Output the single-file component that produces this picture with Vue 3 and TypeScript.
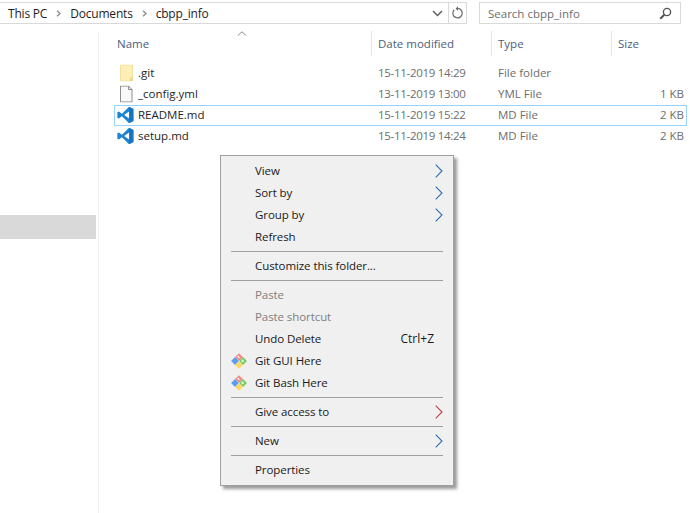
<template>
  <div class="explorer">
    <div class="toolbar">
      <div class="address">
        <div class="crumbs">
          <template v-for="(crumb, i) in crumbs" :key="crumb">
            <span>{{ crumb }}</span>
            <svg v-if="i < crumbs.length - 1" class="crumb-sep" width="5" height="7" viewBox="0 0 5 7">
              <path d="M1 .8 4 3.5 1 6.2" fill="none" stroke="#8a8a8a" stroke-width="1.3" />
            </svg>
          </template>
        </div>
        <svg class="drop" width="11" height="7" viewBox="0 0 11 7">
          <path d="M1 1 5.5 5.5 10 1" fill="none" stroke="#5f5f5f" stroke-width="1.5" />
        </svg>
        <div class="refresh">
          <svg width="13" height="14" viewBox="0 0 13 14">
            <path d="M5 2.6H8C10 3.3 11.2 5 11.2 7.2A4.7 4.7 0 1 1 3.2 3.8" fill="none" stroke="#707070" stroke-width="1.3" />
            <path d="M7 .3V5L4.6 2.6Z" fill="#707070" />
          </svg>
        </div>
      </div>
      <div class="search">
        <span>Search cbpp_info</span>
        <svg width="13" height="13" viewBox="0 0 13 13">
          <circle cx="8" cy="5" r="3.6" fill="none" stroke="#555" stroke-width="1.4" />
          <path d="M5.3 7.7 1.2 11.8" fill="none" stroke="#555" stroke-width="2" />
        </svg>
      </div>
    </div>

    <div class="body">
      <aside class="sidebar">
        <div class="nav-selected"></div>
      </aside>
      <main class="files">
        <div class="sort-caret">
          <svg width="10" height="5" viewBox="0 0 10 5">
            <path d="M.8 4.6 5 .8 9.2 4.6" fill="none" stroke="#8c8c8c" />
          </svg>
        </div>
        <div class="head">
          <div class="col-name">Name</div>
          <div class="col-date">Date modified</div>
          <div class="col-type">Type</div>
          <div class="col-size">Size</div>
        </div>
        <div class="rows">
          <div v-for="file in files" :key="file.name" class="row" :class="{ selected: file.selected }">
            <div class="col-name name-cell">
              <svg v-if="file.icon === 'folder'" class="file-icon" width="17" height="17" viewBox="0 0 17 17">
                <path d="M3.5 .5H15.5V16.5H3.5Z" fill="#fdefb6" stroke="#f2dfa0" />
                <path d="M13 13H15.5V16.5H13Z" fill="#f0d98e" />
              </svg>
              <svg v-else-if="file.icon === 'doc'" class="file-icon" width="17" height="17" viewBox="0 0 17 17">
                <path d="M3.5 .5H11.5L15 4V16.5H3.5Z" fill="#f8f8f8" stroke="#8d8d8d" />
                <path d="M11.5 .5V4H15" fill="none" stroke="#8d8d8d" />
              </svg>
              <svg v-else class="file-icon" width="17" height="17" viewBox="0 0 100 100">
                <path d="M71 98 97 86V14L71 2 29 43 11 29 2 34V66L11 71 29 57ZM71 29V71L42 50Z" fill="#1f84cf" />
                <path d="M71 2 97 14V86L71 98Z" fill="#0f6cb8" opacity=".55" />
              </svg>
              <span>{{ file.name }}</span>
            </div>
            <div class="col-date cell digits">{{ file.date }}</div>
            <div class="col-type cell">{{ file.type }}</div>
            <div class="col-size cell size">{{ file.size }}</div>
          </div>
        </div>
      </main>
    </div>

    <div class="menu">
      <template v-for="(item, i) in menu" :key="i">
        <div v-if="item.sep" class="sep"></div>
        <div v-else class="item" :class="{ disabled: item.disabled }">
          <svg v-if="item.git" class="git" width="16" height="16" viewBox="0 0 16 16">
            <path d="M8 .2 11.9 4 8 7.8 4.1 4Z" fill="#f58a86" />
            <path d="M6.6 3 8.4 4.8" stroke="#fff" stroke-width="1.2" />
            <path d="M4 4.1 7.9 8 4 11.9 .1 8Z" fill="#5c9df2" />
            <path d="M12 4.1 15.9 8 12 11.9 8.1 8Z" fill="#74c95c" />
            <circle cx="11.6" cy="8" r="1.4" fill="#dff5d6" />
            <path d="M8 8.2 11.9 12 8 15.8 4.1 12Z" fill="#fbd964" />
          </svg>
          <span class="label">{{ item.label }}</span>
          <span v-if="item.shortcut" class="shortcut">{{ item.shortcut }}</span>
          <svg v-if="item.arrow" class="arrow" width="8" height="14" viewBox="0 0 8 14">
            <path d="M.7.7 7 7 .7 13.3" fill="none" :stroke="item.arrow" stroke-width="1.1" />
          </svg>
        </div>
      </template>
    </div>
  </div>
</template>

<script setup lang="ts">
interface FileRow {
  name: string;
  date: string;
  type: string;
  size: string;
  icon: 'folder' | 'doc' | 'code';
  selected?: boolean;
}

interface MenuItem {
  label?: string;
  sep?: boolean;
  disabled?: boolean;
  git?: boolean;
  shortcut?: string;
  arrow?: string;
}

const crumbs = ['This PC', 'Documents', 'cbpp_info'];

const files: FileRow[] = [
  { name: '.git', date: '15-11-2019 14:29', type: 'File folder', size: '', icon: 'folder' },
  { name: '_config.yml', date: '13-11-2019 13:00', type: 'YML File', size: '1 KB', icon: 'doc' },
  { name: 'README.md', date: '15-11-2019 15:22', type: 'MD File', size: '2 KB', icon: 'code', selected: true },
  { name: 'setup.md', date: '15-11-2019 14:24', type: 'MD File', size: '2 KB', icon: 'code' }
];

const blue = '#2f6fb5';

const menu: MenuItem[] = [
  { label: 'View', arrow: blue },
  { label: 'Sort by', arrow: blue },
  { label: 'Group by', arrow: blue },
  { label: 'Refresh' },
  { sep: true },
  { label: 'Customize this folder...' },
  { sep: true },
  { label: 'Paste', disabled: true },
  { label: 'Paste shortcut', disabled: true },
  { label: 'Undo Delete', shortcut: 'Ctrl+Z' },
  { label: 'Git GUI Here', git: true },
  { label: 'Git Bash Here', git: true },
  { sep: true },
  { label: 'Give access to', arrow: '#b5473f' },
  { sep: true },
  { label: 'New', arrow: blue },
  { sep: true },
  { label: 'Properties' }
];
</script>

<style scoped>
.explorer {
  position: relative;
  width: 690px;
  height: 513px;
  overflow: hidden;
  background: #fff;
  color: #1e1e1e;
  font-family: "Open Sans", "Noto Sans", sans-serif;
  font-size: 11.5px;
}

.toolbar {
  display: flex;
  gap: 12px;
  height: 22px;
  margin-top: 2px;
  padding-right: 9px;
}

.address {
  display: flex;
  align-items: center;
  width: 467px;
  border: 1px solid #d9d9d9;
  border-left: none;
  box-sizing: border-box;
}

.crumbs {
  display: flex;
  align-items: center;
  flex: 1;
  padding-left: 8px;
  font-size: 12px;
  letter-spacing: -0.2px;
}

.crumb-sep {
  margin: 0 9px;
}

.drop {
  margin-right: 5px;
}

.refresh {
  display: flex;
  align-items: center;
  justify-content: center;
  width: 17px;
  height: 100%;
  border-left: 1px solid #d9d9d9;
}

.search {
  display: flex;
  align-items: center;
  justify-content: space-between;
  flex: 1;
  padding: 0 8px;
  border: 1px solid #d9d9d9;
  box-sizing: border-box;
  color: #6d6d6d;
  font-size: 11.5px;
}

.body {
  display: flex;
  height: 482px;
  margin-top: 7px;
}

.sidebar {
  width: 98px;
  flex: none;
  padding-top: 184px;
  border-right: 1px solid #f2f2f2;
}

.nav-selected {
  width: 96px;
  height: 24px;
  background: #d9d9d9;
}

.files {
  position: relative;
  flex: 1;
  padding-left: 18px;
}

.sort-caret {
  position: absolute;
  left: 138px;
  top: 0;
  line-height: 0;
}

.head {
  display: flex;
  align-items: stretch;
  height: 25px;
  color: #4c607a;
}

.head > div {
  display: flex;
  align-items: center;
  padding-bottom: 1px;
  border-right: 1px solid #e5e5e5;
  box-sizing: border-box;
}

.head .col-size {
  border-right: none;
}

.col-name {
  width: 255px;
}

.col-date {
  width: 120px;
  padding-left: 6px;
}

.col-type {
  width: 120px;
  padding-left: 6px;
}

.col-size {
  width: 72px;
  padding-left: 6px;
}

.rows {
  margin-top: 7px;
}

.row {
  display: flex;
  align-items: center;
  width: 573px;
  height: 21px;
  margin-left: -3px;
  padding-left: 3px;
  padding-bottom: 2px;
  box-sizing: border-box;
}

.row.selected {
  outline: 1px solid #99d1ff;
  outline-offset: -1px;
}

.name-cell {
  position: relative;
  display: flex;
  align-items: center;
  padding-left: 21px;
  box-sizing: border-box;
}

.file-icon {
  position: absolute;
  left: 0;
  top: 50%;
  transform: translateY(-50%);
}

.cell {
  color: #6d6d6d;
  box-sizing: border-box;
}

.digits {
  letter-spacing: -0.3px;
}

.size {
  text-align: right;
}

.menu {
  position: absolute;
  left: 220px;
  top: 155px;
  width: 234px;
  padding: 4px 0;
  box-sizing: border-box;
  border: 1px solid #a0a0a0;
  background: #f0f0f0;
  box-shadow: 3px 3px 3px rgba(0, 0, 0, 0.4);
  color: #1a1a1a;
}

.item {
  position: relative;
  display: flex;
  align-items: center;
  height: 22px;
  padding-left: 34px;
  padding-right: 19px;
  padding-bottom: 2px;
  box-sizing: border-box;
}

.item.disabled {
  color: #7f7f7f;
}

.label {
  flex: 1;
  letter-spacing: -0.08px;
}

.shortcut {
  font-size: 12px;
}

.git {
  position: absolute;
  left: 10px;
  top: 3px;
}

.arrow {
  position: absolute;
  right: 10px;
  top: 4px;
}

.sep {
  height: 1px;
  margin: 3px 10px;
  background: #a0a0a0;
}
</style>

<style>
html,
body {
  background: #fff;
}
</style>
